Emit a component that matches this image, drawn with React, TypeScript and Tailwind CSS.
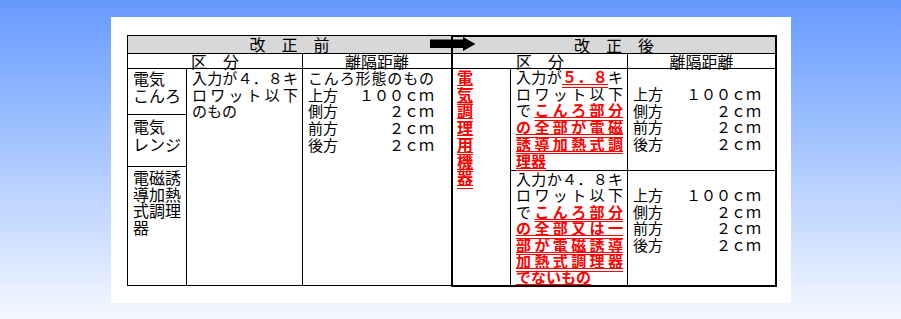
import React from "react";

// red + bold + double underline, as in the original sheet
const R = ({ children }: { children: React.ReactNode }) => (
  <span className="font-bold text-[#ff0000] underline decoration-double decoration-[#ff0000]">
    {children}
  </span>
);

// one line stretched to the full cell width
const J = ({ children }: { children: React.ReactNode }) => (
  <div className="text-justify [text-align-last:justify]">{children}</div>
);

const Dist = ({ label, value }: { label: string; value: string }) => (
  <div className="flex justify-between">
    <span>{label}</span>
    <span>{value}</span>
  </div>
);

const distances = [
  { label: "上方", value: "１００ｃｍ" },
  { label: "側方", value: "２ｃｍ" },
  { label: "前方", value: "２ｃｍ" },
  { label: "後方", value: "２ｃｍ" },
];

const App = () => {
  return (
    <div className="h-[319px] w-full bg-linear-to-b from-[#6699ff] to-[#f4f7ff] pl-[111px] pt-[17px] font-['Noto_Sans_CJK_JP',sans-serif] text-[16px] text-black">
      <div className="h-[286px] w-[680px] bg-white pl-[16px] pt-[18px]">
        <div className="relative flex">
          {/* BEFORE */}
          <div className="flex h-[251px] w-[324px] flex-col border-y border-l border-black">
            <div className="h-[18px] border-b border-black bg-[#d8d8d8] text-center leading-[17px]">
              改　正　前
            </div>
            <div className="flex h-[15px] border-b border-black leading-[14px]">
              <div className="w-[175px] border-r border-black text-center">区　分</div>
              <div className="flex-1 text-center">離隔距離</div>
            </div>
            <div className="flex flex-1 leading-[16.7px]">
              <div className="flex w-[59px] flex-col border-r border-black">
                <div className="h-[46px] border-b border-black pl-[5px] pt-px">
                  電気
                  <br />
                  こんろ
                </div>
                <div className="h-[52px] border-b border-black pl-[5px] pt-[3px] leading-[17.5px]">
                  電気
                  <br />
                  レンジ
                </div>
                <div className="flex-1 pl-[5px] pt-[2px]">
                  電磁誘
                  <br />
                  導加熱
                  <br />
                  式調理
                  <br />器
                </div>
              </div>
              <div className="w-[116px] border-r border-black pl-[5px] pr-[4px] pt-px text-[15px]">
                <J>入力が４．８キ</J>
                <J>ロワット以下</J>
                <div>のもの</div>
              </div>
              <div className="flex-1 pl-[5px] pr-[17px] pt-px text-[15px]">
                <J>こんろ形態のもの</J>
                {distances.map((d) => (
                  <Dist key={d.label} {...d} />
                ))}
              </div>
            </div>
          </div>

          {/* AFTER */}
          <div className="flex h-[252px] w-[326px] flex-col border-2 border-black">
            <div className="h-[17px] border-b border-black bg-[#d8d8d8] text-center leading-[16px]">
              改　正　後
            </div>
            <div className="flex h-[15px] border-b border-black leading-[14px]">
              <div className="w-[175px] border-r border-black text-center">区　分</div>
              <div className="flex-1 text-center">離隔距離</div>
            </div>
            <div className="flex flex-1 leading-[16.7px]">
              <div className="flex w-[58px] flex-col border-r border-black pl-[4px] pt-0">
                {"電気調理用機器".split("").map((c, i) => (
                  <div key={i}>
                    <R>{c}</R>
                  </div>
                ))}
              </div>
              <div className="flex flex-1 flex-col text-[15px]">
                <div className="flex h-[102px] border-b border-black">
                  <div className="w-[117px] border-r border-black pl-[5px] pr-[4px]">
                    <J>
                      入力が<R>５．８</R>キ
                    </J>
                    <J>ロワット以下</J>
                    <J>
                      で<R>こんろ部分</R>
                    </J>
                    <J>
                      <R>の全部が電磁</R>
                    </J>
                    <J>
                      <R>誘導加熱式調</R>
                    </J>
                    <div>
                      <R>理器</R>
                    </div>
                  </div>
                  <div className="flex-1 pl-[5px] pr-[14px] pt-[17px]">
                    {distances.map((d) => (
                      <Dist key={d.label} {...d} />
                    ))}
                  </div>
                </div>
                <div className="flex flex-1">
                  <div className="w-[117px] overflow-hidden border-r border-black pl-[5px] pr-[4px] leading-[16.4px]">
                    <J>入力か４．８キ</J>
                    <J>ロワット以下</J>
                    <J>
                      で<R>こんろ部分</R>
                    </J>
                    <J>
                      <R>の全部又は一</R>
                    </J>
                    <J>
                      <R>部が電磁誘導</R>
                    </J>
                    <J>
                      <R>加熱式調理器</R>
                    </J>
                    <div>
                      <R>でないもの</R>
                    </div>
                  </div>
                  <div className="flex-1 pl-[5px] pr-[14px] pt-[16px]">
                    {distances.map((d) => (
                      <Dist key={d.label} {...d} />
                    ))}
                  </div>
                </div>
              </div>
            </div>
          </div>

          {/* ARROW */}
          <svg
            className="absolute left-[303px] top-[2px]"
            width="46"
            height="14"
            viewBox="0 0 46 14"
          >
            <path d="M0 2.5H33V0L45.5 7L33 14V11H0Z" fill="#000" />
          </svg>
        </div>
      </div>
    </div>
  );
};

export default App;
